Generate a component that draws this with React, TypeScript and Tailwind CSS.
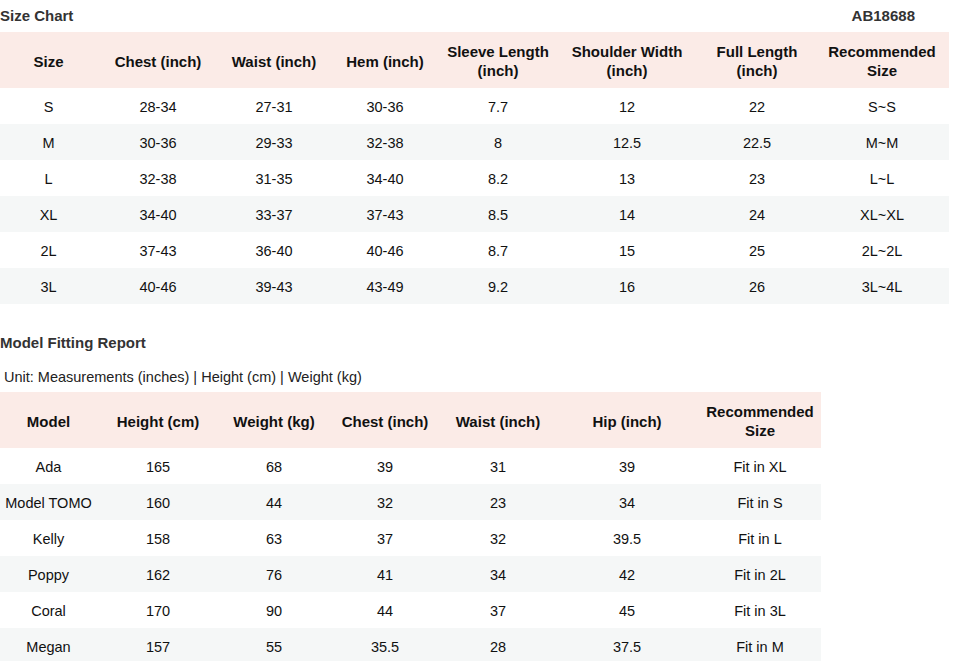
import React from "react";

const sizeCols = [97, 122, 110, 112, 114, 144, 116, 134];
const sizeHead = [
  ["Size"],
  ["Chest (inch)"],
  ["Waist (inch)"],
  ["Hem (inch)"],
  ["Sleeve Length", "(inch)"],
  ["Shoulder Width", "(inch)"],
  ["Full Length", "(inch)"],
  ["Recommended", "Size"],
];
const sizeRows = [
  ["S", "28-34", "27-31", "30-36", "7.7", "12", "22", "S~S"],
  ["M", "30-36", "29-33", "32-38", "8", "12.5", "22.5", "M~M"],
  ["L", "32-38", "31-35", "34-40", "8.2", "13", "23", "L~L"],
  ["XL", "34-40", "33-37", "37-43", "8.5", "14", "24", "XL~XL"],
  ["2L", "37-43", "36-40", "40-46", "8.7", "15", "25", "2L~2L"],
  ["3L", "40-46", "39-43", "43-49", "9.2", "16", "26", "3L~4L"],
];

const modelCols = [97, 122, 110, 112, 114, 144, 122];
const modelHead = [
  ["Model"],
  ["Height (cm)"],
  ["Weight (kg)"],
  ["Chest (inch)"],
  ["Waist (inch)"],
  ["Hip (inch)"],
  ["Recommended", "Size"],
];
const modelRows = [
  ["Ada", "165", "68", "39", "31", "39", "Fit in XL"],
  ["Model TOMO", "160", "44", "32", "23", "34", "Fit in S"],
  ["Kelly", "158", "63", "37", "32", "39.5", "Fit in L"],
  ["Poppy", "162", "76", "41", "34", "42", "Fit in 2L"],
  ["Coral", "170", "90", "44", "37", "45", "Fit in 3L"],
  ["Megan", "157", "55", "35.5", "28", "37.5", "Fit in M"],
];

function Table({
  cols,
  head,
  rows,
}: {
  cols: number[];
  head: string[][];
  rows: string[][];
}) {
  const total = cols.reduce((a, b) => a + b, 0);
  return (
    <table
      className="table-fixed border-collapse text-[14.5px] text-[#111]"
      style={{ width: total }}
    >
      <colgroup>
        {cols.map((w, i) => (
          <col key={i} style={{ width: w }} />
        ))}
      </colgroup>
      <thead>
        <tr className="h-[56px] bg-[#fbebe7]">
          {head.map((h, i) => (
            <th
              key={i}
              className="p-0 pt-[2px] text-center align-middle text-[15px] font-bold leading-[19px] text-[#111]"
            >
              {h.map((line, j) => (
                <div key={j}>{line}</div>
              ))}
            </th>
          ))}
        </tr>
      </thead>
      <tbody>
        {rows.map((r, i) => (
          <tr
            key={i}
            className={i % 2 === 1 ? "h-[36px] bg-[#f5f7f7]" : "h-[36px] bg-white"}
          >
            {r.map((c, j) => (
              <td key={j} className="p-0 pt-[2px] text-center align-middle leading-[18px]">
                {c}
              </td>
            ))}
          </tr>
        ))}
      </tbody>
    </table>
  );
}

export default function App() {
  return (
    <div
      className="bg-white w-[967px] h-[661px] overflow-hidden"
      style={{ fontFamily: '"Liberation Sans", Arial, sans-serif' }}
    >
      <div className="w-[949px] h-[32px] flex items-center justify-between pr-[34px]">
        <span className="text-[15px] font-bold text-[#333]">Size Chart</span>
        <span className="text-[15px] font-bold text-[#333]">AB18688</span>
      </div>
      <Table cols={sizeCols} head={sizeHead} rows={sizeRows} />
      <div className="mt-[19px] h-[40px] flex items-center text-[15px] font-bold text-[#333]">
        Model Fitting Report
      </div>
      <div className="h-[29px] flex items-center pl-[4px] text-[14.5px] text-[#222]">
        Unit: Measurements (inches) | Height (cm) | Weight (kg)
      </div>
      <Table cols={modelCols} head={modelHead} rows={modelRows} />
    </div>
  );
}
